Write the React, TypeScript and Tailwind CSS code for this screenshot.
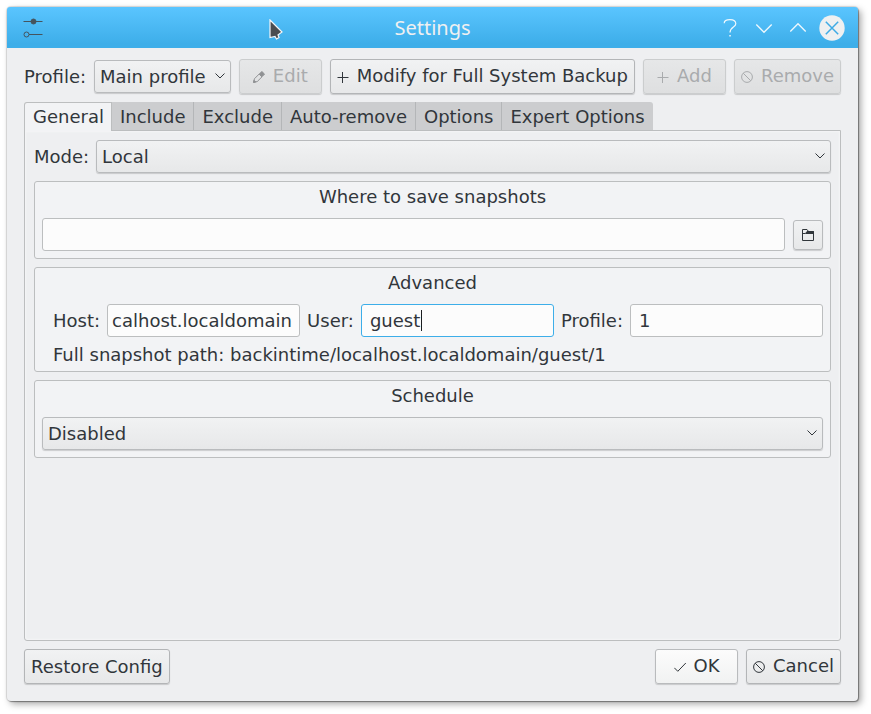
import { useLayoutEffect, useRef, type ReactNode } from "react";

const raised =
  "rounded-[3px] border border-[#b9bbbd] bg-linear-to-b from-[#f1f2f3] to-[#e7e8e9] shadow-[0_1px_1px_rgba(0,0,0,0.16)]";
const field =
  "h-[33px] min-w-0 rounded-[3px] border bg-[#fcfcfc] text-[18px] text-[#31363b] outline-none";

function PlusIcon() {
  return (
    <svg width="12" height="12" viewBox="0 0 12 12" fill="none" stroke="currentColor" aria-hidden="true">
      <path d="M0.5 6.5H11.5M5.5 1V12" />
    </svg>
  );
}

function PencilIcon() {
  return (
    <svg width="12" height="12" viewBox="0 0 12 12" fill="none" stroke="#8f9193" aria-hidden="true">
      <path d="M0.7 11.3L1.4 7.8L6.2 3L9 5.8L4.2 10.6Z" />
      <path d="M0.5 11.5L1 9.3L2.7 11Z" fill="#8f9193" />
      <path d="M6.3 3L8.9 0.5L11.5 3.1L9 5.7Z" fill="#8f9193" />
    </svg>
  );
}

function ForbidIcon() {
  return (
    <svg width="12" height="12" viewBox="0 0 12 12" fill="none" stroke="currentColor" aria-hidden="true">
      <circle cx="6" cy="6" r="5.4" />
      <path d="M2.2 2.2L9.8 9.8" />
    </svg>
  );
}

function CheckIcon() {
  return (
    <svg width="12" height="12" viewBox="0 0 12 12" fill="none" stroke="currentColor" aria-hidden="true">
      <path d="M0.3 6.8L3.8 10.3L11.8 2" />
    </svg>
  );
}

function FolderIcon() {
  return (
    <svg width="12" height="12" viewBox="0 0 12 12" fill="none" stroke="currentColor" aria-hidden="true">
      <path d="M0.5 0.5H5L6.5 2.5H11.5V11.5H0.5Z" />
      <path d="M0.5 4.5H3.5L5 2.5H11.5V4.5H4" fill="currentColor" />
    </svg>
  );
}

function Button({
  icon,
  children,
  disabled = false,
  highlighted = false,
  className = "",
}: {
  icon?: ReactNode;
  children: ReactNode;
  disabled?: boolean;
  highlighted?: boolean;
  className?: string;
}) {
  const tone = disabled
    ? "border-[#cbcdce] from-[#e6e7e8] to-[#dedfe0] text-[#a9abad]"
    : highlighted
      ? "border-[#b9bbbd] from-[#fcfcfc] to-[#f1f2f2]"
      : "border-[#b3b5b7] from-[#f1f2f3] to-[#e7e8e9]";
  return (
    <button
      type="button"
      disabled={disabled}
      className={`flex h-[35px] shrink-0 items-center justify-center gap-2 rounded-[3px] border bg-linear-to-b px-[6px] whitespace-nowrap shadow-[0_1px_1px_rgba(0,0,0,0.16)] ${tone} ${className}`}
    >
      {icon}
      <span className={icon ? "pb-[2px]" : ""}>{children}</span>
    </button>
  );
}

function Select({ id, label, option, className }: { id: string; label?: string; option: string; className: string }) {
  return (
    <div className={`relative ${className}`}>
      <select id={id} aria-label={label} className={`${raised} h-[33px] w-full appearance-none pr-5 pl-[5px] text-[18px] outline-none`}>
        <option>{option}</option>
      </select>
      <svg
        className="pointer-events-none absolute top-[13px] right-[6px]"
        width="10"
        height="6"
        viewBox="0 0 10 6"
        fill="none"
        stroke="currentColor"
        aria-hidden="true"
      >
        <path d="M0.5 0.5L5 5L9.5 0.5" />
      </svg>
    </div>
  );
}

function Group({ title, children }: { title: string; children: ReactNode }) {
  return (
    <section className="rounded-[3px] border border-[#bcbebf] bg-[#f2f3f5] px-[7px]">
      <h2 className="mb-[6px] text-center leading-[30px]">{title}</h2>
      {children}
    </section>
  );
}

function TitleBar() {
  return (
    <header className="relative grid h-[41px] grid-cols-[1fr_auto_1fr] items-center rounded-t-[3px] bg-linear-to-b from-[#5ac5ff] to-[#3daee9] to-90% px-[13px]">
      <svg className="ml-[3px]" width="20" height="22" viewBox="0 0 20 22" fill="none" stroke="#45545e" aria-hidden="true">
        <path d="M0.5 4.5H19.5M6 17.5H19.5" />
        <circle cx="10.5" cy="4.5" r="2.5" fill="#45545e" />
        <circle cx="3.5" cy="17.5" r="2.5" />
      </svg>
      <h1 className="font-['Noto_Sans','Open_Sans',sans-serif] text-[20px] leading-[26px] text-[#eff0f1]">Settings</h1>
      <div className="flex justify-end gap-2 text-[#eff8fd]">
        <button type="button" aria-label="Help" className="size-[26px]">
          <svg width="26" height="26" viewBox="0 0 26 26" fill="none" stroke="currentColor" strokeWidth="1.2">
            <path d="M7.2 8.2C7.2 6 9.6 4.6 13 4.6C16.8 4.6 18.8 6.3 18.8 8.7C18.8 12.4 13 11.6 13 17.6" />
            <path d="M12.3 20.8H13.8" strokeWidth="1.6" />
          </svg>
        </button>
        <button type="button" aria-label="Minimize" className="size-[26px]">
          <svg width="26" height="26" viewBox="0 0 26 26" fill="none" stroke="currentColor" strokeWidth="1.3">
            <path d="M5.3 9.5L13 17.3L20.7 9.5" />
          </svg>
        </button>
        <button type="button" aria-label="Maximize" className="size-[26px]">
          <svg width="26" height="26" viewBox="0 0 26 26" fill="none" stroke="currentColor" strokeWidth="1.3">
            <path d="M5.3 16.5L13 8.7L20.7 16.5" />
          </svg>
        </button>
        <button type="button" aria-label="Close" className="size-[26px]">
          <svg width="26" height="26" viewBox="0 0 26 26" fill="none" stroke="#3fabe5" strokeWidth="1.5">
            <circle cx="13" cy="13" r="12.7" fill="#eff0f1" stroke="none" />
            <path d="M6.8 6.8L19.2 19.2M19.2 6.8L6.8 19.2" />
          </svg>
        </button>
      </div>
      <svg className="absolute top-3 left-[262px]" width="14" height="22" viewBox="0 0 14 22" aria-hidden="true">
        <path d="M1 1L13 13L9 16L10 18.5L7.5 20L6 17.5L1 18.5Z" fill="#4a4d50" stroke="#f4f6f8" strokeWidth="1.2" />
      </svg>
    </header>
  );
}

const tabs = ["General", "Include", "Exclude", "Auto-remove", "Options", "Expert Options"];

export default function App() {
  const host = useRef<HTMLInputElement>(null);

  // Long host names show their tail.
  useLayoutEffect(() => {
    if (host.current) host.current.scrollLeft = host.current.scrollWidth;
  }, []);

  return (
    <div className="flex min-h-screen flex-col bg-white pt-[7px] pr-[13px] pb-[13px] pl-[7px] font-['DejaVu_Sans',sans-serif] text-[18px] leading-6 text-[#31363b]">
      <div className="flex grow flex-col rounded-[4px] bg-[#eeeff1] shadow-[0_0_1px_1px_rgba(0,0,0,0.13),1px_1px_1px_rgba(0,0,0,0.3),3px_3px_7px_rgba(0,0,0,0.35)]">
        <TitleBar />
        <main className="flex grow flex-col gap-2 px-[17px] pt-[11px] pb-[17px]">
          <div className="flex items-center gap-2">
            <label htmlFor="profile">Profile:</label>
            <Select id="profile" option="Main profile" className="w-[136px] grow" />
            <Button disabled className="w-[83px]" icon={<PencilIcon />}>Edit</Button>
            <Button icon={<PlusIcon />}>Modify for Full System Backup</Button>
            <Button disabled className="w-[83px]" icon={<PlusIcon />}>Add</Button>
            <Button disabled icon={<ForbidIcon />}>Remove</Button>
          </div>

          <div className="flex grow flex-col">
            <div role="tablist" className="flex">
              {tabs.map((tab, i) => (
                <button
                  key={tab}
                  type="button"
                  role="tab"
                  aria-selected={i === 0}
                  className={
                    i === 0
                      ? "relative -mb-px h-[29px] rounded-tl-[3px] border-x border-t border-[#bcbebf] bg-[#f2f3f5] pr-[7px] pl-2"
                      : "h-[28px] border-r border-[#b4b6b8] bg-[#cccdcf] px-2 pt-[2px] last:rounded-tr-[3px] last:border-r-0"
                  }
                >
                  {tab}
                </button>
              ))}
            </div>
            <div
              role="tabpanel"
              className="flex grow flex-col gap-2 rounded-b-[3px] border border-[#bcbebf] bg-[#eeeff1] px-[9px] py-[9px] shadow-[inset_0_0_2px_1px_#f4f5f6]"
            >
              <div className="flex items-center gap-[7px]">
                <label htmlFor="mode">Mode:</label>
                <Select id="mode" option="Local" className="grow" />
              </div>

              <Group title="Where to save snapshots">
                <div className="flex items-center gap-2 pb-[7px]">
                  <input aria-label="Where to save snapshots" className={`${field} grow border-[#bcbebf] px-2`} />
                  <button type="button" aria-label="Choose folder" className={`${raised} flex size-[30px] items-center justify-center`}>
                    <FolderIcon />
                  </button>
                </div>
              </Group>

              <Group title="Advanced">
                <div className="flex items-center gap-[7px] pl-[11px]">
                  <label htmlFor="host">Host:</label>
                  <input
                    id="host"
                    ref={host}
                    defaultValue="localhost.localdomain"
                    className={`${field} w-[192px] grow border-[#bcbebf] pr-[7px] pl-1`}
                  />
                  <label htmlFor="user">User:</label>
                  <div className="relative flex w-[192px] min-w-0 grow">
                    <input id="user" defaultValue="guest" className={`${field} w-full border-[#3daee9] px-2`} />
                    <span className="pointer-events-none absolute top-[6px] left-[60px] h-[21px] w-px bg-[#1b1e20]" />
                  </div>
                  <label htmlFor="profile-id">Profile:</label>
                  <input id="profile-id" defaultValue="1" className={`${field} w-[192px] grow border-[#bcbebf] px-2`} />
                </div>
                <p className="pt-[6px] pb-1 pl-[11px]">
                  Full snapshot path: backintime/localhost.localdomain/guest/1
                </p>
              </Group>

              <Group title="Schedule">
                <Select id="schedule" label="Schedule" option="Disabled" className="mb-[7px]" />
              </Group>
            </div>
          </div>

          <div className="flex gap-2">
            <Button className="mr-auto">Restore Config</Button>
            <Button highlighted className="w-[83px]" icon={<CheckIcon />}>OK</Button>
            <Button icon={<ForbidIcon />}>Cancel</Button>
          </div>
        </main>
      </div>
    </div>
  );
}
